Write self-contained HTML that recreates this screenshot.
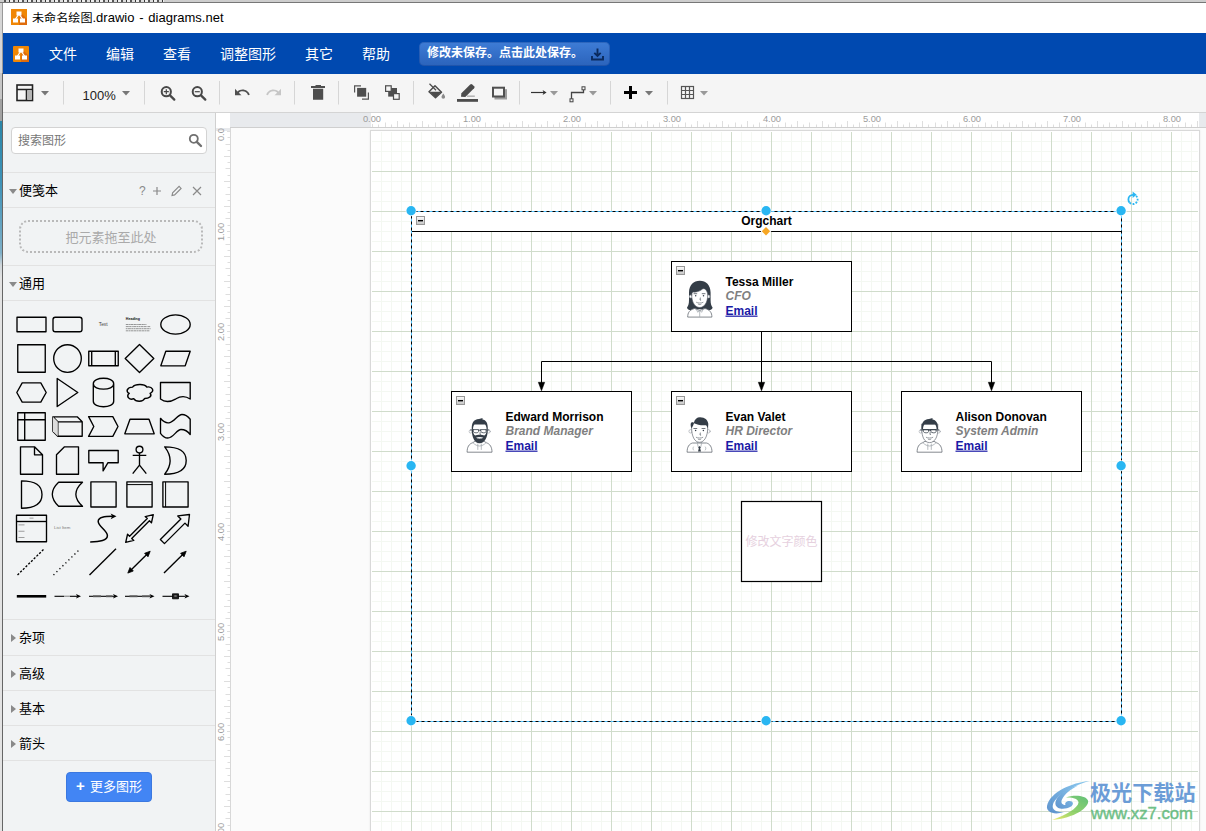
<!DOCTYPE html>
<html lang="zh-CN">
<head>
<meta charset="utf-8">
<title>未命名绘图.drawio - diagrams.net</title>
<style>
*{box-sizing:border-box;margin:0;padding:0}
html,body{width:1206px;height:831px;overflow:hidden;background:#c9c9c9}
body{position:relative;font-family:"Liberation Sans","Noto Sans CJK SC",sans-serif;font-size:12px;color:#000}
.abs{position:absolute}
#win{position:absolute;left:3px;top:3px;width:1203px;height:828px;background:#fbfbfb;overflow:hidden}
#title{position:absolute;left:0;top:0;width:1203px;height:30px;background:#fff}
#title .t{position:absolute;left:29px;top:6px;font-size:12.1px;line-height:18px;white-space:nowrap;color:#000}
#title .t span{font-size:13px;word-spacing:1.2px}
#menubar{position:absolute;left:0;top:30px;width:1203px;height:41px;background:#0049b0}
#menubar .m{position:absolute;top:12px;font-size:14px;line-height:18px;color:#fff;white-space:nowrap}
#save{position:absolute;left:416px;top:9px;width:191px;height:24px;border-radius:5px;background:linear-gradient(#3e7cd6,#2b63bb);box-shadow:0 0 0 1px rgba(0,40,120,.25) inset;color:#fff;font-weight:bold;font-size:12px;line-height:23px;padding-left:8px;white-space:nowrap}
#toolbar{position:absolute;left:0;top:71px;width:1203px;height:39px;background:#f5f5f5;border-bottom:1px solid #d4d4d4}
.sep{position:absolute;top:10px;width:1px;height:22px;background:#d6d6d6}
#sidebar{position:absolute;left:0;top:110px;width:213px;height:718px;background:#f1f3f4;border-right:1px solid #d0d0d0}
.sect{position:absolute;left:0;width:212px;border-top:1px solid #e2e2e2}
.sect .lbl{position:absolute;left:16px;font-size:13px;line-height:16px;white-space:nowrap;color:#000}
.tri-d{position:absolute;width:0;height:0;border-left:4px solid transparent;border-right:4px solid transparent;border-top:5px solid #8a8a8a}
.tri-r{position:absolute;width:0;height:0;border-top:4px solid transparent;border-bottom:4px solid transparent;border-left:5px solid #8a8a8a}
#hruler{position:absolute;left:227px;top:110px;width:976px;height:15px;background:#fff;border-bottom:1px solid #cfcfcf}
#vruler{position:absolute;left:213px;top:125px;width:15px;height:703px;background:#fff;border-right:1px solid #d8d8d8}
#corner{position:absolute;left:213px;top:110px;width:14px;height:15px;background:#fff}
#page{position:absolute;left:367px;top:127px;width:830px;height:701px;background:#fff;border:1px solid #d9d9d9;border-bottom:none;box-shadow:0 0 2px rgba(0,0,0,.08)}
</style>
</head>
<body>
<div class="abs" style="left:0;top:0;width:1206px;height:3px;background:#cdcdcd;border-bottom:1px solid #777"></div><div class="abs" style="left:4px;top:0;width:160px;height:2px;background:repeating-linear-gradient(90deg,#555 0 2px,#ddd 2px 5px,#333 5px 6px,#eee 6px 9px)"></div>
<div class="abs" style="left:0;top:3px;width:3px;height:828px;background:linear-gradient(#d6d6d6 0 70px,#c6c6c6 70px 96px,#a2a2a2 96px 118px,#2a86a8 118px,#3f93b8 180px,#7fb0c8 250px,#cfd6da 262px,#e3e3e3 275px)"></div><div class="abs" style="left:2px;top:3px;width:1px;height:70px;background:#999"></div><div class="abs" style="left:2px;top:73px;width:1px;height:758px;background:#666"></div>
<div id="win">
  <!-- title bar -->
  <div id="title">
    <svg class="abs" style="left:8px;top:6px" width="16" height="16" viewBox="0 0 16 16"><rect width="16" height="16" fill="#f08705"/><path d="M9 3 L16 10 L16 16 L8 16 Z" fill="#df6c0c"/><rect x="5.5" y="2.5" width="5" height="4" fill="#fff"/><rect x="2" y="9.5" width="5" height="4" fill="#fff"/><rect x="9" y="9.5" width="5" height="4" fill="#fff"/><path d="M7.3 6 L4.5 10 M8.7 6 L11.5 10" stroke="#fff" stroke-width="1.3"/></svg>
    <div class="t"><b style="font-weight:normal;display:inline-block;transform:scaleY(.9);transform-origin:50% 62%">未命名绘图</b><span>.drawio - diagrams.net</span></div>
  </div>
  <!-- menubar -->
  <div id="menubar">
    <svg class="abs" style="left:10px;top:13px" width="16" height="16" viewBox="0 0 16 16"><rect width="16" height="16" rx="1" fill="#f08705"/><path d="M9 3 L16 10 L16 16 L8 16 Z" fill="#df6c0c"/><rect x="5.5" y="2.5" width="5" height="4" fill="#fff"/><rect x="2" y="9.5" width="5" height="4" fill="#fff"/><rect x="9" y="9.5" width="5" height="4" fill="#fff"/><path d="M7.3 6 L4.5 10 M8.7 6 L11.5 10" stroke="#fff" stroke-width="1.3"/></svg>
    <div class="m" style="left:46px">文件</div>
    <div class="m" style="left:103px">编辑</div>
    <div class="m" style="left:160px">查看</div>
    <div class="m" style="left:217px">调整图形</div>
    <div class="m" style="left:302px">其它</div>
    <div class="m" style="left:359px">帮助</div>
    <div id="save">修改未保存。点击此处保存。<svg class="abs" style="left:172px;top:6px" width="13" height="13" viewBox="0 0 13 13"><path d="M6.500 0.500 V7.500 M3.300 4.800 L6.500 8 L9.700 4.800" fill="none" stroke="#0a2a5e" stroke-width="1.900"/><path d="M1 8 V11.500 H12 V8" fill="none" stroke="#0a2a5e" stroke-width="1.900"/></svg></div>
  </div>
  <!-- toolbar -->
  <div id="toolbar"><svg class="abs" style="left:0;top:-1px" width="1203" height="40" viewBox="3 73 1203 40">
<g fill="none" stroke="#222" stroke-width="1.6">
<rect x="17" y="85" width="15.5" height="15.5"/><path d="M17 89.5 H32.5 M26.5 89.5 V100.5"/>
</g>
<rect x="27.3" y="90.3" width="4.4" height="9.4" fill="#b5b5b5"/>
<g fill="#777"><path d="M41 91 h8 l-4 4.5z"/><path d="M122 91 h8 l-4 4.5z"/></g>
<g fill="#999"><path d="M550 91 h8 l-4 4.5z"/><path d="M589 91 h8 l-4 4.5z"/><path d="M700 91 h8 l-4 4.5z"/></g>
<path d="M645 91 h8 l-4 4.5z" fill="#777"/>
<g fill="#d6d6d6"><rect x="63" y="81" width="1" height="23.5"/><rect x="144" y="81" width="1" height="23.5"/><rect x="219" y="81" width="1" height="23.5"/><rect x="294" y="81" width="1" height="23.5"/><rect x="338" y="81" width="1" height="23.5"/><rect x="413" y="81" width="1" height="23.5"/><rect x="519" y="81" width="1" height="23.5"/><rect x="610" y="81" width="1" height="23.5"/><rect x="667" y="81" width="1" height="23.5"/></g>
<text x="82.5" y="99.5" font-size="13" fill="#222" style="font-family:'Liberation Sans',sans-serif">100%</text>
<!-- zoom in/out -->
<g fill="none" stroke="#484848" stroke-width="2"><circle cx="166.300" cy="91.700" r="4.600"/><path d="M170 95.400 L174.300 99.600" stroke-width="2.300" stroke-linecap="round"/><path d="M163.800 91.700 h5 M166.300 89.200 v5" stroke-width="1.200"/>
<circle cx="197.300" cy="91.700" r="4.600"/><path d="M201 95.400 L205.300 99.600" stroke-width="2.300" stroke-linecap="round"/><path d="M194.800 91.700 h5" stroke-width="1.200"/></g>
<!-- undo / redo -->
<path transform="translate(233.560 83.760) scale(.72)" d="M12.5 8c-2.650 0-5.050.990-6.900 2.600L2 7v9h9l-3.620-3.620c1.390-1.160 3.160-1.880 5.120-1.880 3.540 0 6.550 2.310 7.600 5.500l2.370-.780C21.080 11.030 17.150 8 12.500 8z" fill="#505050"/>
<path transform="translate(265.160 83.760) scale(.72)" d="M18.400 10.600C16.550 8.990 14.150 8 11.500 8c-4.650 0-8.580 3.030-9.960 7.220L3.900 16c1.050-3.190 4.050-5.500 7.600-5.500 1.950 0 3.730.720 5.120 1.880L13 16h9V7l-3.600 3.600z" fill="#c6c6c6"/>
<!-- trash -->
<path d="M311 86 h4.500 v-1 h5.500 v1 h4 v2 h-14z M313 88.800 h10.200 v11 h-10.200z" fill="#4e4e4e"/>
<!-- to front -->
<g><path d="M354 85.200 h7 v1.200 h-5.800 v6.100 h-1.200z M369 99.800 h-7 v-1.200 h5.800 v-6.100 h1.200z" fill="#555"/><rect x="357.100" y="87.900" width="9.100" height="8.800" fill="#4e4e4e"/></g>
<!-- to back -->
<g><rect x="388.200" y="88" width="8.800" height="8.600" fill="#4e4e4e"/><rect x="385.600" y="85.800" width="5.600" height="5.600" fill="#f5f5f5" stroke="#4e4e4e" stroke-width="1.200"/><rect x="393.500" y="93.600" width="5.700" height="5.700" fill="#f5f5f5" stroke="#4e4e4e" stroke-width="1.200"/></g>
<!-- fill bucket -->
<g transform="translate(-1 -.8)"><path d="M430.500 84.500 L437 91" stroke="#4c4c4c" stroke-width="1.300" fill="none"/><path d="M436 86.500 L442.500 93 L436.500 98.500 L430 92.500 Z" fill="none" stroke="#4c4c4c" stroke-width="1.500" stroke-linejoin="round"/><path d="M430.500 92.500 H442.500 L436.500 98.300 Z" fill="#4c4c4c"/><path d="M444.300 94.300 c1 1.500 1.800 2.500 1.800 3.400 a1.800 1.800 0 0 1 -3.600 0 c0 -0.900 0.800 -1.900 1.800 -3.400z" fill="#8a8a8a"/></g>
<!-- line colour pencil -->
<g><rect x="457" y="99" width="21" height="2.800" fill="#4c4c4c"/><path d="M461 96.800 l0.400 -3.600 l8.800 -8.800 a1.500 1.500 0 0 1 2.100 0 l1.800 1.800 a1.500 1.500 0 0 1 0 2.100 l-8.800 8.800z" fill="#4c4c4c"/><rect x="467" y="95.600" width="7.800" height="1.100" fill="#9a9a9a"/></g>
<!-- shadow -->
<g><rect x="494.500" y="89.200" width="12.500" height="10.300" fill="#9d9d9d"/><rect x="493" y="87.700" width="11" height="8.800" fill="#f5f5f5" stroke="#505050" stroke-width="2"/></g>
<!-- connection arrow -->
<path d="M531 92.500 H544" stroke="#333" stroke-width="1.200" fill="none"/><path d="M546.600 92.500 L542.600 90 L543.600 92.500 L542.600 95 Z" fill="#333"/>
<!-- waypoints -->
<g fill="none" stroke="#444" stroke-width="1.300"><path d="M571.500 99 V92.500 H583.500 V89.500"/><rect x="570" y="98.800" width="3" height="3" fill="#f5f5f5" stroke-width="1"/><rect x="582" y="86.800" width="3" height="3" fill="#f5f5f5" stroke-width="1"/></g>
<!-- plus -->
<path d="M624 92.500 H637 M630.500 86 V99" stroke="#000" stroke-width="3" fill="none"/>
<!-- table -->
<g fill="none" stroke="#555" stroke-width="1.200"><rect x="681.500" y="86.500" width="12" height="12"/><path d="M685.500 86.500 V98.500 M689.500 86.500 V98.500 M681.500 90.500 H693.500 M681.500 94.500 H693.500"/></g>
</svg>
</div>
  <!-- sidebar -->
  <div id="sidebar"><div class="abs" style="left:8px;top:14px;width:196px;height:27px;background:#fff;border:1px solid #d3d3d3;border-radius:4px"></div>
<div class="abs" style="left:15px;top:20px;font-size:12px;line-height:16px;color:#777;white-space:nowrap">搜索图形</div>
<svg class="abs" style="left:185px;top:20px" width="15" height="15" viewBox="0 0 15 15"><circle cx="5.8" cy="5.8" r="4" fill="none" stroke="#707070" stroke-width="1.8"/><path d="M8.800 8.800 L13 13" stroke="#707070" stroke-width="2.4" stroke-linecap="round"/></svg>
<div class="sect" style="top:59px;height:36px"><div class="tri-d" style="left:6px;top:16px"></div><div class="lbl" style="top:10px">便笺本</div>
<div class="abs" style="left:136px;top:10px;font-size:12px;line-height:16px;color:#8a8a8a">?</div>
<svg class="abs" style="left:148px;top:12px" width="54" height="12" viewBox="0 0 54 12"><g stroke="#8a8a8a" fill="none" stroke-width="1.2"><path d="M2 6 H10 M6 2 V10"/><path d="M42 2 L50 10 M50 2 L42 10"/></g><path d="M21 10.500 l0.600 -2.600 l6.500 -6.500 l2 2 l-6.500 6.500z" fill="none" stroke="#8a8a8a" stroke-width="1.100"/></svg></div>
<div class="sect" style="top:94px;height:58px"><div class="abs" style="left:16px;top:12px;width:184px;height:33px;border:2px dotted #b9b9b9;border-radius:9px"></div><div class="abs" style="left:16px;top:12px;width:184px;height:33px;line-height:35px;text-align:center;font-size:13px;color:#aaa">把元素拖至此处</div></div>
<div class="sect" style="top:152px;height:36px"><div class="tri-d" style="left:6px;top:16px"></div><div class="lbl" style="top:10px">通用</div></div>
<div class="sect" style="top:187px;height:320px"></div>
<div class="sect" style="top:506px;height:36px"><div class="tri-r" style="left:8px;top:14px"></div><div class="lbl" style="top:10px">杂项</div></div>
<div class="sect" style="top:542px;height:36px"><div class="tri-r" style="left:8px;top:14px"></div><div class="lbl" style="top:10px">高级</div></div>
<div class="sect" style="top:577px;height:36px"><div class="tri-r" style="left:8px;top:14px"></div><div class="lbl" style="top:10px">基本</div></div>
<div class="sect" style="top:612px;height:36px"><div class="tri-r" style="left:8px;top:14px"></div><div class="lbl" style="top:10px">箭头</div></div>
<div class="sect" style="top:647px;height:71px"><div class="abs" style="left:63px;top:11px;width:86px;height:30px;border-radius:4px;background:#4285f4;border:1px solid #3b78e0;color:#fff;font-size:13px;line-height:28px;white-space:nowrap"><span class="abs" style="left:9px;top:-1px;font-weight:bold;font-size:15px">+</span><span class="abs" style="left:23px;top:0">更多图形</span></div></div>
<svg class="abs" style="left:0;top:0" width="212" height="718" viewBox="3 113 212 718"><g fill="none" stroke="#000" stroke-width="1.35" stroke-linejoin="round" style="font-family:'Liberation Sans',sans-serif">
<rect x="17" y="317.25" width="29" height="14.5" />
<rect x="53" y="317.25" width="29" height="14.5" rx="2.3"/>
<text x="103.200" y="326.300" font-size="4.900" text-anchor="middle" fill="#444" stroke="none">Text</text>
<text x="125.800" y="320.400" font-size="3.600" fill="#111" stroke="none" font-weight="bold">Heading</text>
<path d="M125.800 324.50 H146.5" stroke="#555" stroke-width=".600" stroke-dasharray="2.2 .4 1.500 .4 3 .4" fill="none"/>
<path d="M125.800 326.60 H150.2" stroke="#555" stroke-width=".600" stroke-dasharray="3 .4 2 .4 1.200 .4" fill="none"/>
<path d="M125.800 328.70 H150.6" stroke="#555" stroke-width=".600" stroke-dasharray="1.500 .4 3.200 .4 2 .4" fill="none"/>
<path d="M125.800 330.80 H149.5" stroke="#555" stroke-width=".600" stroke-dasharray="2.600 .4 1.800 .4 2.400 .4" fill="none"/>
<ellipse cx="175.5" cy="324.5" rx="14.7" ry="9.6"/>
<rect x="17.75" y="344.75" width="27.5" height="27.5" />
<circle cx="67.5" cy="358.5" r="13.8"/>
<rect x="88.75" y="351.25" width="29.5" height="14.5" />
<path transform="translate(103.5 358.5)" d="M-11.8 -7.25 V7.25 M11.8 -7.25 V7.25" />
<path transform="translate(139.5 358.5)" d="M0 -14 L14.3 0 L0 14 L-14.3 0 Z" />
<path transform="translate(175.5 358.5)" d="M-14.7 7.3 L-9.7 -7.3 H14.7 L9.7 7.3 Z" />
<path transform="translate(31.5 392.5)" d="M-14.700 0 L-9.300 -9.600 H9.300 L14.700 0 L9.300 9.600 H-9.300 Z" />
<path transform="translate(67.5 392.5)" d="M-10.3 -14 L10.3 0 L-10.3 14 Z" />
<path transform="translate(103.5 392.5)" d="M-10.200 -8.800 C-10.200 -16.100 10.200 -16.100 10.200 -8.800 V8.800 C10.200 16.100 -10.200 16.100 -10.200 8.800 Z M-10.200 -8.800 C-10.200 -1.500 10.200 -1.500 10.200 -8.800" />
<path transform="translate(139.7 392.8) scale(1.1 1.04)" d="M-6.5 -5.5 C-11.5 -5.500 -13 -1 -9.500 0.500 C-13 3.500 -9 7.500 -5.500 5.700 C-3.500 9 3 9 4.500 5.500 C8.500 5.500 11.500 3 9.500 0.500 C14 -1.500 11.500 -6.500 6.500 -5.500 C4 -9 -4 -8.500 -6.500 -5.500 Z" />
<path transform="translate(175.5 392.5)" d="M-15 -10 H14.700 V6.500 C10 3.300 5 3.500 0.500 6.300 C-4.500 9.200 -10 10.500 -15 6.500 Z" />
<rect x="17.75" y="412.75" width="27.5" height="27.5" />
<path transform="translate(31.5 426.5)" d="M-6.8 -13.75 V13.75 M-13.75 -6.8 H13.75" />
<path transform="translate(67.5 426.5)" d="M-14.700 -9.700 H9.700 L14.700 -4.700 V9.700 H-9.700 L-14.700 4.700 Z M-14.700 -9.700 L-9.700 -4.700 H14.700 M-9.700 -4.700 V9.700" />
<path transform="translate(67.5 426.5)" d="M-14.700 -9.700 L-9.700 -4.700 V9.700 L-14.700 4.700 Z" fill="#dcdcdc" stroke="none"/>
<path transform="translate(103.5 426.5)" d="M-14.900 -9.900 H9.300 L14.500 0 L9.300 9.900 H-14.900 L-9.700 0 Z" />
<path transform="translate(139.5 426.5)" d="M-14.700 7.300 L-9.500 -7.300 H9.500 L14.700 7.300 Z" />
<path transform="translate(175.5 426.5)" d="M-15 -8.200 C-12 -4.500 -9 -3.300 -6.500 -3.700 C-1 -4.500 2 -12 6.500 -12 C10 -12 12.500 -10 14.700 -7.300 V8.100 C12.500 5 9.500 3 5.500 3 C1 3 -2 11.500 -7.800 11.500 C-10.500 11.500 -13 9.500 -15 6.800 Z" />
<path transform="translate(31.5 460.5)" d="M-11 -13.700 H3 L11 -5.700 V13.700 H-11 Z M3 -13.700 V-5.700 H11" />
<path transform="translate(67.5 460.5)" d="M-3 -13.700 H11 V13.700 H-11 V-5.700 Z" />
<path transform="translate(103.5 460.5)" d="M-14.700 -10 H14.700 V2.200 H4.500 L-0.400 10.400 V2.200 H-14.700 Z" />
<path transform="translate(139.5 460.5)" d="M0 -7.500 V4.700 M-6.800 -5.100 H6.800 M0 4.700 L-6.800 13.200 M0 4.700 L6.800 13.200" />
<circle cx="139.5" cy="449.600" r="3.400"/>
<path transform="translate(175.5 460.5)" d="M-10.800 -13.700 Q10.700 -13.700 10.700 0 Q10.700 13.700 -10.800 13.700 Q0 0 -10.800 -13.700 Z" />
<path transform="translate(31.5 494.5)" d="M-10 -13.700 Q10.500 -13.700 10.500 0 Q10.500 13.700 -10 13.700 Z" />
<path transform="translate(67.5 494.5)" d="M-8.900 -12.300 H15 Q1.700 -0.300 15 11.700 H-8.900 Q-21.500 -0.300 -8.900 -12.300 Z" />
<rect x="90.9" y="481.800" width="25.200" height="25.200" />
<rect x="126.9" y="481.800" width="25.200" height="25.200" />
<path transform="translate(139.5 494.5)" d="M-12.600 -9.900 H12.600" stroke-width="1" />
<rect x="162.9" y="481.800" width="25.200" height="25.200" />
<path transform="translate(175.5 494.5)" d="M-9.900 -12.600 V12.600" stroke-width="1" />
<rect x="16.5" y="515.25" width="30" height="26.5" />
<path transform="translate(31.5 528.5)" d="M-15 -7 H15" />
<rect x="18.5" y="524.5" width="6" height="0.8" fill="#888" stroke="none"/>
<rect x="18.5" y="530.8" width="6" height="0.8" fill="#888" stroke="none"/>
<rect x="18.5" y="537.1" width="6" height="0.8" fill="#888" stroke="none"/>
<rect x="29.5" y="517.7" width="4" height="0.8" fill="#888" stroke="none"/>
<text x="54.0" y="529.0" font-size="4.300" fill="#777" stroke="none">List Item</text>
<path d="M90.200 541.900 C100 541.900 107.500 540.500 107.400 535.500 C107.300 530.500 98.300 526.500 98.200 521.500 C98.100 517 105 516.400 112.500 516.300" stroke-width="1.500"/>
<path d="M116.500 516.300 L110.600 513.400 L112.200 516.300 L110.600 519.200 Z" fill="#000" stroke="none"/>
<path transform="translate(139.5 528.5) rotate(-45)" d="M-19.500 0 L-12.500 -4.400 V-1.500 H12.500 V-4.400 L19.500 0 L12.500 4.400 V1.500 H-12.500 V4.400 Z"/>
<path transform="translate(175.5 528.5) rotate(-45)" d="M-18.500 -2.900 H10.500 V-7.300 L19.800 0 L10.500 7.300 V2.900 H-18.500 Z"/>
<path d="M17.500 575 L44 549" stroke-dasharray="2.2 1.6"/>
<path d="M53.500 575 L79 550" stroke-dasharray="1.2 3"/>
<path d="M89.500 575 L116 548.800"/>
<path d="M130.500 570.500 L147.500 553.700"/><path d="M127.800 573.100 L130 567.500 L133.300 571 Z M150.200 551.200 L148 556.800 L144.600 553.300 Z" fill="#000" stroke-width="0.8"/>
<path d="M164 573 L183.500 553.700"/><path d="M186.200 551.200 L184 556.800 L180.600 553.300 Z" fill="#000" stroke-width="0.8"/>
<path d="M16.800 596.3 H46.200" stroke-width="2.6"/>
<path d="M54.5 596.3 H77" stroke-width="1.1"/><path d="M81 596.3 l-5 -2.200 l1.200 2.200 l-1.200 2.200 Z" fill="#000" stroke="none"/>
<rect x="64" y="595.3" width="6" height="2" fill="#f1f3f4" stroke="none" opacity="0.6"/>
<path d="M89 596.3 H114" stroke-width="1.1"/><path d="M118 596.3 l-5 -2.200 l1.200 2.200 l-1.200 2.200 Z" fill="#000" stroke="none"/>
<rect x="93" y="595.400" width="8" height="1.800" fill="#555" stroke="none"/><rect x="106" y="595.400" width="6.500" height="1.800" fill="#555" stroke="none"/>
<path d="M125 596.3 H150.5" stroke-width="1.1"/><path d="M154.5 596.3 l-5 -2.200 l1.200 2.200 l-1.200 2.200 Z" fill="#000" stroke="none"/>
<rect x="129.500" y="595.400" width="8" height="1.800" fill="#555" stroke="none"/><rect x="142" y="595.400" width="8" height="1.800" fill="#555" stroke="none"/>
<path d="M162.5 596.3 H185.5" stroke-width="1.1"/><path d="M189.5 596.3 l-5 -2.200 l1.200 2.200 l-1.200 2.200 Z" fill="#000" stroke="none"/>
<rect x="172.500" y="593.8" width="6" height="5" fill="#1c1c1c" stroke="#000" stroke-width="0.8"/><rect x="174.3" y="595.5" width="2.400" height="1" fill="#aaa" stroke="none"/>
</g></svg><!--SIDEBAR_END--></div>
  <!-- rulers -->
  <div id="corner"></div>
  <div id="hruler"><svg class="abs" style="left:0;top:0;font-family:'Liberation Sans',sans-serif" width="976" height="15" viewBox="230 113 976 15">
<rect x="230" y="113" width="141" height="14" fill="#e8eaed"/><rect x="1199" y="113" width="7" height="14" fill="#e8eaed"/>
<path d="M372.5 127 v-3 M378.5 127 v-2.5 M385.5 127 v-4.5 M391.5 127 v-2.5 M397.5 127 v-6 M403.5 127 v-2.5 M409.5 127 v-4.5 M416.5 127 v-2.5 M422.5 127 v-6 M428.5 127 v-2.5 M435.5 127 v-4.5 M441.5 127 v-2.5 M447.5 127 v-6 M453.5 127 v-2.5 M459.5 127 v-4.5 M466.5 127 v-2.5 M472.5 127 v-3 M478.5 127 v-2.5 M485.5 127 v-4.5 M491.5 127 v-2.5 M497.5 127 v-6 M503.5 127 v-2.5 M509.5 127 v-4.5 M516.5 127 v-2.5 M522.5 127 v-6 M528.5 127 v-2.5 M535.5 127 v-4.5 M541.5 127 v-2.5 M547.5 127 v-6 M553.5 127 v-2.5 M559.5 127 v-4.5 M566.5 127 v-2.5 M572.5 127 v-3 M578.5 127 v-2.5 M585.5 127 v-4.5 M591.5 127 v-2.5 M597.5 127 v-6 M603.5 127 v-2.5 M609.5 127 v-4.5 M616.5 127 v-2.5 M622.5 127 v-6 M628.5 127 v-2.5 M635.5 127 v-4.5 M641.5 127 v-2.5 M647.5 127 v-6 M653.5 127 v-2.5 M659.5 127 v-4.5 M666.5 127 v-2.5 M672.5 127 v-3 M678.5 127 v-2.5 M685.5 127 v-4.5 M691.5 127 v-2.5 M697.5 127 v-6 M703.5 127 v-2.5 M709.5 127 v-4.5 M716.5 127 v-2.5 M722.5 127 v-6 M728.5 127 v-2.5 M735.5 127 v-4.5 M741.5 127 v-2.5 M747.5 127 v-6 M753.5 127 v-2.5 M759.5 127 v-4.5 M766.5 127 v-2.5 M772.5 127 v-3 M778.5 127 v-2.5 M785.5 127 v-4.5 M791.5 127 v-2.5 M797.5 127 v-6 M803.5 127 v-2.5 M809.5 127 v-4.5 M816.5 127 v-2.5 M822.5 127 v-6 M828.5 127 v-2.5 M835.5 127 v-4.5 M841.5 127 v-2.5 M847.5 127 v-6 M853.5 127 v-2.5 M859.5 127 v-4.5 M866.5 127 v-2.5 M872.5 127 v-3 M878.5 127 v-2.5 M885.5 127 v-4.5 M891.5 127 v-2.5 M897.5 127 v-6 M903.5 127 v-2.5 M909.5 127 v-4.5 M916.5 127 v-2.5 M922.5 127 v-6 M928.5 127 v-2.5 M935.5 127 v-4.5 M941.5 127 v-2.5 M947.5 127 v-6 M953.5 127 v-2.5 M959.5 127 v-4.5 M966.5 127 v-2.5 M972.5 127 v-3 M978.5 127 v-2.5 M985.5 127 v-4.5 M991.5 127 v-2.5 M997.5 127 v-6 M1003.5 127 v-2.5 M1009.5 127 v-4.5 M1016.5 127 v-2.5 M1022.5 127 v-6 M1028.5 127 v-2.5 M1035.5 127 v-4.5 M1041.5 127 v-2.5 M1047.5 127 v-6 M1053.5 127 v-2.5 M1059.5 127 v-4.5 M1066.5 127 v-2.5 M1072.5 127 v-3 M1078.5 127 v-2.5 M1085.5 127 v-4.5 M1091.5 127 v-2.5 M1097.5 127 v-6 M1103.5 127 v-2.5 M1109.5 127 v-4.5 M1116.5 127 v-2.5 M1122.5 127 v-6 M1128.5 127 v-2.5 M1135.5 127 v-4.5 M1141.5 127 v-2.5 M1147.5 127 v-6 M1153.5 127 v-2.5 M1159.5 127 v-4.5 M1166.5 127 v-2.5 M1172.5 127 v-3 M1178.5 127 v-2.5 M1185.5 127 v-4.5 M1191.5 127 v-2.5 M1197.5 127 v-6" stroke="#dedede" stroke-width="1" fill="none"/>
<text x="372" y="122" font-size="9.3" fill="#9c9c9c" text-anchor="middle">0.00</text>
<text x="472" y="122" font-size="9.3" fill="#9c9c9c" text-anchor="middle">1.00</text>
<text x="572" y="122" font-size="9.3" fill="#9c9c9c" text-anchor="middle">2.00</text>
<text x="672" y="122" font-size="9.3" fill="#9c9c9c" text-anchor="middle">3.00</text>
<text x="772" y="122" font-size="9.3" fill="#9c9c9c" text-anchor="middle">4.00</text>
<text x="872" y="122" font-size="9.3" fill="#9c9c9c" text-anchor="middle">5.00</text>
<text x="972" y="122" font-size="9.3" fill="#9c9c9c" text-anchor="middle">6.00</text>
<text x="1072" y="122" font-size="9.3" fill="#9c9c9c" text-anchor="middle">7.00</text>
<text x="1172" y="122" font-size="9.3" fill="#9c9c9c" text-anchor="middle">8.00</text>
</svg></div>
  <div id="vruler"><svg class="abs" style="left:0;top:0;font-family:'Liberation Sans',sans-serif" width="14" height="703" viewBox="216 128 14 703">
<rect x="216" y="128" width="14" height="3" fill="#e8eaed"/>
<path d="M230 131.5 h-3 M230 137.5 h-2.5 M230 144.5 h-4.5 M230 150.5 h-2.5 M230 156.5 h-6 M230 162.5 h-2.5 M230 168.5 h-4.5 M230 175.5 h-2.5 M230 181.5 h-6 M230 187.5 h-2.5 M230 194.5 h-4.5 M230 200.5 h-2.5 M230 206.5 h-6 M230 212.5 h-2.5 M230 218.5 h-4.5 M230 225.5 h-2.5 M230 231.5 h-3 M230 237.5 h-2.5 M230 244.5 h-4.5 M230 250.5 h-2.5 M230 256.5 h-6 M230 262.5 h-2.5 M230 268.5 h-4.5 M230 275.5 h-2.5 M230 281.5 h-6 M230 287.5 h-2.5 M230 294.5 h-4.5 M230 300.5 h-2.5 M230 306.5 h-6 M230 312.5 h-2.5 M230 318.5 h-4.5 M230 325.5 h-2.5 M230 331.5 h-3 M230 337.5 h-2.5 M230 344.5 h-4.5 M230 350.5 h-2.5 M230 356.5 h-6 M230 362.5 h-2.5 M230 368.5 h-4.5 M230 375.5 h-2.5 M230 381.5 h-6 M230 387.5 h-2.5 M230 394.5 h-4.5 M230 400.5 h-2.5 M230 406.5 h-6 M230 412.5 h-2.5 M230 418.5 h-4.5 M230 425.5 h-2.5 M230 431.5 h-3 M230 437.5 h-2.5 M230 444.5 h-4.5 M230 450.5 h-2.5 M230 456.5 h-6 M230 462.5 h-2.5 M230 468.5 h-4.5 M230 475.5 h-2.5 M230 481.5 h-6 M230 487.5 h-2.5 M230 494.5 h-4.5 M230 500.5 h-2.5 M230 506.5 h-6 M230 512.5 h-2.5 M230 518.5 h-4.5 M230 525.5 h-2.5 M230 531.5 h-3 M230 537.5 h-2.5 M230 544.5 h-4.5 M230 550.5 h-2.5 M230 556.5 h-6 M230 562.5 h-2.5 M230 568.5 h-4.5 M230 575.5 h-2.5 M230 581.5 h-6 M230 587.5 h-2.5 M230 594.5 h-4.5 M230 600.5 h-2.5 M230 606.5 h-6 M230 612.5 h-2.5 M230 618.5 h-4.5 M230 625.5 h-2.5 M230 631.5 h-3 M230 637.5 h-2.5 M230 644.5 h-4.5 M230 650.5 h-2.5 M230 656.5 h-6 M230 662.5 h-2.5 M230 668.5 h-4.5 M230 675.5 h-2.5 M230 681.5 h-6 M230 687.5 h-2.5 M230 694.5 h-4.5 M230 700.5 h-2.5 M230 706.5 h-6 M230 712.5 h-2.5 M230 718.5 h-4.5 M230 725.5 h-2.5 M230 731.5 h-3 M230 737.5 h-2.5 M230 744.5 h-4.5 M230 750.5 h-2.5 M230 756.5 h-6 M230 762.5 h-2.5 M230 768.5 h-4.5 M230 775.5 h-2.5 M230 781.5 h-6 M230 787.5 h-2.5 M230 794.5 h-4.5 M230 800.5 h-2.5 M230 806.5 h-6 M230 812.5 h-2.5 M230 818.5 h-4.5 M230 825.5 h-2.5 M230 831.5 h-3" stroke="#dedede" stroke-width="1" fill="none"/>
<text transform="translate(223.600 132) rotate(-90)" font-size="9.3" fill="#9c9c9c" text-anchor="middle">0.00</text>
<text transform="translate(223.600 232) rotate(-90)" font-size="9.3" fill="#9c9c9c" text-anchor="middle">1.00</text>
<text transform="translate(223.600 332) rotate(-90)" font-size="9.3" fill="#9c9c9c" text-anchor="middle">2.00</text>
<text transform="translate(223.600 432) rotate(-90)" font-size="9.3" fill="#9c9c9c" text-anchor="middle">3.00</text>
<text transform="translate(223.600 532) rotate(-90)" font-size="9.3" fill="#9c9c9c" text-anchor="middle">4.00</text>
<text transform="translate(223.600 632) rotate(-90)" font-size="9.3" fill="#9c9c9c" text-anchor="middle">5.00</text>
<text transform="translate(223.600 732) rotate(-90)" font-size="9.3" fill="#9c9c9c" text-anchor="middle">6.00</text>
<text transform="translate(223.600 832) rotate(-90)" font-size="9.3" fill="#9c9c9c" text-anchor="middle">7.00</text>
</svg></div>
  <!-- page -->
  <div id="page"><svg class="abs" width="829" height="700" viewBox="371 131 829 700" style="left:0;top:0;font-family:'Liberation Sans','Noto Sans CJK SC',sans-serif">
<defs><linearGradient id="cg" x1="0" y1="0" x2="0" y2="1"><stop offset="0" stop-color="#fcfcfc"/><stop offset="1" stop-color="#c4c4c4"/></linearGradient><pattern id="grid" x="371" y="131" width="40" height="40" patternUnits="userSpaceOnUse"><path d="M10.5 0 V40 M20.5 0 V40 M30.5 0 V40 M0 10.5 H40 M0 20.5 H40 M0 30.5 H40" stroke="#f4f8f2" stroke-width="1" fill="none"/><path d="M0.5 0 V40 M0 0.5 H40" stroke="#d0dccb" stroke-width="1" fill="none"/></pattern></defs>
<rect x="371" y="131" width="828" height="700" fill="#fff"/>
<rect x="372" y="132" width="826" height="699" fill="url(#grid)"/>
<rect x="411.5" y="211.5" width="710" height="510" fill="none" stroke="#000"/>
<rect x="411.5" y="211.5" width="710" height="20" fill="#fff" stroke="#000"/>
<text x="766.5" y="225.3" text-anchor="middle" font-size="12" font-weight="bold">Orgchart</text>
<g><rect x="416.5" y="216.5" width="8" height="8" fill="url(#cg)" stroke="#979797" stroke-width="1"/><rect x="418" y="220" width="5" height="1.4" fill="#000"/></g>
<path d="M761.5 331.5 V383 M541.5 383 V361.5 H991.5 V383" fill="none" stroke="#000" stroke-width="1"/>
<path d="M541.5 390.8 L538.3 382.300 H544.7 Z" fill="#000" stroke="#000" stroke-width=".5" stroke-linejoin="miter"/>
<path d="M761.5 390.8 L758.3 382.300 H764.7 Z" fill="#000" stroke="#000" stroke-width=".5" stroke-linejoin="miter"/>
<path d="M991.5 390.8 L988.3 382.300 H994.7 Z" fill="#000" stroke="#000" stroke-width=".5" stroke-linejoin="miter"/>
<rect x="671.5" y="261.5" width="180" height="70" fill="#fff" stroke="#000"/>
<g><rect x="676.5" y="266.5" width="8" height="8" fill="url(#cg)" stroke="#979797" stroke-width="1"/><rect x="678" y="270" width="5" height="1.4" fill="#000"/></g>
<text x="725.5" y="285.8" font-size="12" font-weight="bold">Tessa Miller</text>
<text x="725.5" y="300.2" font-size="12" font-weight="bold" font-style="italic" fill="#808080">CFO</text>
<text x="725.5" y="314.6" font-size="12" font-weight="bold" fill="#1a1aa6" text-decoration="underline">Email</text>
<rect x="451.5" y="391.5" width="180" height="80" fill="#fff" stroke="#000"/>
<g><rect x="456.5" y="396.5" width="8" height="8" fill="url(#cg)" stroke="#979797" stroke-width="1"/><rect x="458" y="400" width="5" height="1.4" fill="#000"/></g>
<text x="505.5" y="420.8" font-size="12" font-weight="bold">Edward Morrison</text>
<text x="505.5" y="435.2" font-size="12" font-weight="bold" font-style="italic" fill="#808080">Brand Manager</text>
<text x="505.5" y="449.6" font-size="12" font-weight="bold" fill="#1a1aa6" text-decoration="underline">Email</text>
<rect x="671.5" y="391.5" width="180" height="80" fill="#fff" stroke="#000"/>
<g><rect x="676.5" y="396.5" width="8" height="8" fill="url(#cg)" stroke="#979797" stroke-width="1"/><rect x="678" y="400" width="5" height="1.4" fill="#000"/></g>
<text x="725.5" y="420.8" font-size="12" font-weight="bold">Evan Valet</text>
<text x="725.5" y="435.2" font-size="12" font-weight="bold" font-style="italic" fill="#808080">HR Director</text>
<text x="725.5" y="449.6" font-size="12" font-weight="bold" fill="#1a1aa6" text-decoration="underline">Email</text>
<rect x="901.5" y="391.5" width="180" height="80" fill="#fff" stroke="#000"/>
<text x="955.5" y="420.8" font-size="12" font-weight="bold">Alison Donovan</text>
<text x="955.5" y="435.2" font-size="12" font-weight="bold" font-style="italic" fill="#808080">System Admin</text>
<text x="955.5" y="449.6" font-size="12" font-weight="bold" fill="#1a1aa6" text-decoration="underline">Email</text>
<g id="av-tessa" transform="translate(680 275)" stroke-linecap="round" stroke-linejoin="round">
<path d="M19.800 5.800 C13.500 5.800 9.200 10 9 17.500 L9 25 C9 29 8.200 31 7 32.500 C7.500 35.500 11.500 35.800 14 34.300 L25.600 34.300 C28.100 35.800 32.100 35.500 32.600 32.500 C31.400 31 30.600 29 30.600 25 L30.600 17.500 C30.400 10 26.100 5.800 19.800 5.800 Z" fill="#343d47"/>
<path d="M7.700 41.700 C7.700 37.500 9.500 35 14.500 33.500 L19.700 35.500 L25 33.500 C30 35 31.900 37.500 31.900 41.700 Z" fill="#fff" stroke="#666c73" stroke-width=".8"/>
<path d="M16 33.800 L17.800 37.300 L19.700 35.300 L21.600 37.300 L23.500 33.800 M19.700 35.500 V41.500" fill="none" stroke="#9aa0a6" stroke-width=".7"/>
<circle cx="10.900" cy="21.500" r="1.500" fill="#fff" stroke="#9aa0a6" stroke-width=".6"/><circle cx="28.400" cy="21.500" r="1.500" fill="#fff" stroke="#9aa0a6" stroke-width=".6"/>
<path d="M11.700 20 C11.700 27.500 15 32.500 19.700 32.500 C24.400 32.500 27.700 27.500 27.700 20 C27.700 18 27 16 25.500 14.500 C24.500 13.500 23.500 13.500 22.500 14 C20 16.500 15 17.500 12.800 17 C12 18 11.700 19 11.700 20 Z" fill="#fff" stroke="#4b535c" stroke-width=".6"/>
<path d="M14 18.700 H16.800 M22.200 18.700 H25" stroke="#4b535c" stroke-width=".8" fill="none"/>
<circle cx="15.700" cy="20.700" r=".75" fill="#343d47"/><circle cx="23.500" cy="20.700" r=".75" fill="#343d47"/>
<path d="M20.300 23 L20 25 L20.700 25.100" stroke="#4b535c" stroke-width=".7" fill="none"/>
<path d="M16.500 27.400 C18 28.300 21.500 28.300 23 27.400 M18.500 29.300 C19.300 29.700 20.200 29.700 21 29.300" stroke="#6a7178" stroke-width=".7" fill="none"/>
</g>
<g id="av-edward" transform="translate(460 410)" stroke-linecap="round" stroke-linejoin="round">
<path d="M7.100 41.800 C7.100 37 9 34 12.500 32.800 L15 31.300 L24 31.300 L26.500 32.800 C30 34 32 37 32 41.800 Z" fill="#fff" stroke="#666c73" stroke-width=".8"/>
<path d="M13 32.700 C15 35 17 35.800 19.500 36 C22 35.800 24 35 26 32.700 M17.800 34 V39.500 M21.300 34 V39.500" fill="none" stroke="#9aa0a6" stroke-width=".7"/>
<circle cx="10.700" cy="21.500" r="1.600" fill="#fff" stroke="#9aa0a6" stroke-width=".6"/><circle cx="28.700" cy="21.500" r="1.600" fill="#fff" stroke="#9aa0a6" stroke-width=".6"/>
<path d="M11.800 19.500 C11.800 27.500 14.500 33.200 19.600 33.200 C24.700 33.200 27.800 27.500 27.800 19.500 L27.800 14 L11.800 14 Z" fill="#fff"/>
<path d="M11.800 19.500 C11.500 13 13.300 9.600 19 9 L22.700 7.900 L22.200 9.300 C26.200 10 28.100 13.500 27.800 19.500 L26.600 19.500 C26.600 17 26 15.200 25 14.400 L14.500 14.400 C13.500 15.200 13 17 13 19.500 Z" fill="#343d47"/>
<path d="M11.800 19.500 C11.800 27.500 14.500 33.200 19.600 33.200 C24.700 33.200 27.800 27.500 27.800 19.500 L26.600 19.500 C26.600 23 25.800 24.800 24.300 25.600 C22.500 24.500 16.800 24.500 15.200 25.600 C13.800 24.800 13 23 13 19.500 Z" fill="#343d47"/>
<path d="M16 27.600 C17.500 26.700 21.800 26.700 23.300 27.600 C22 29.200 17.300 29.200 16 27.600 Z" fill="#e9ebed"/>
<path d="M13.300 19.600 H18.600 V21.500 C18.600 23.300 13.300 23.300 13.300 21.500 Z M20.800 19.600 H26.100 V21.500 C26.100 23.300 20.800 23.300 20.800 21.500 Z M18.600 20.200 H20.800 M13.300 19.800 L10.500 20 M26.100 19.800 L28.900 20" fill="none" stroke="#343d47" stroke-width=".8"/>
<path d="M20.200 22.300 L19.900 24.300 L20.600 24.400" stroke="#4b535c" stroke-width=".7" fill="none"/>
</g>
<g id="av-evan" transform="translate(680 410)" stroke-linecap="round" stroke-linejoin="round">
<path d="M7.100 41.800 C7.100 37 9 34 12.500 33 L26.500 33 C30 34 32 37 32 41.800 Z" fill="#fff" stroke="#666c73" stroke-width=".8"/>
<path d="M17.400 31.500 V33.500 L18.300 37 M21.600 31.500 V33.500 L20.700 37 M13.400 37 C12.800 38 12.800 39 13.500 40 M25.400 37 C26 38 26 39 25.300 40" fill="none" stroke="#9aa0a6" stroke-width=".7"/>
<path d="M19.500 36 L20.800 37.500 L20.200 38.500 L21 41.600 L18 41.600 L18.800 38.500 L18.200 37.500 Z" fill="#343d47"/>
<circle cx="10.600" cy="21.300" r="1.700" fill="#fff" stroke="#9aa0a6" stroke-width=".6"/><circle cx="28.500" cy="21.300" r="1.700" fill="#fff" stroke="#9aa0a6" stroke-width=".6"/>
<path d="M11.600 18 C11.600 26 14.500 32.300 19.500 32.300 C24.500 32.300 27.700 26 27.700 18 L27.700 13 L11.600 13 Z" fill="#fff" stroke="#4b535c" stroke-width=".6"/>
<path d="M11.400 18.300 C10.300 15.500 10.500 12.700 12 12.200 C12.900 12 13.500 12.400 13.800 13 C14.500 9.200 17 7.300 20 7.300 C25 7.300 28.500 10.500 28.200 14.500 C28.100 16.500 27.900 17.500 27.600 18.300 C27.200 16.800 26.700 15.800 26 15.200 C22 15.800 17 14.800 14 13 C13.500 15.200 12.500 17.200 11.400 18.300 Z" fill="#343d47"/>
<path d="M13.800 18.500 H16.800 M22 18.500 H25" stroke="#4b535c" stroke-width=".8" fill="none"/>
<circle cx="15.600" cy="20.600" r=".75" fill="#343d47"/><circle cx="23.400" cy="20.600" r=".75" fill="#343d47"/>
<path d="M20.300 23 L20 25 L20.700 25.100" stroke="#4b535c" stroke-width=".7" fill="none"/>
<path d="M16.300 27.400 C17.800 28.300 21.300 28.300 22.800 27.400 M18.300 29.300 C19.100 29.700 20 29.700 20.800 29.300" stroke="#6a7178" stroke-width=".7" fill="none"/>
</g>
<g id="av-alison" transform="translate(910 410)" stroke-linecap="round" stroke-linejoin="round">
<path d="M7.100 41.800 C7.100 37 9 34 12.500 32.800 L15 31.300 L24 31.300 L26.500 32.800 C30 34 32 37 32 41.800 Z" fill="#fff" stroke="#666c73" stroke-width=".8"/>
<path d="M13 32.700 C15 35 17 35.800 19.500 36 C22 35.800 24 35 26 32.700 M17.800 34 V39.500 M21.300 34 V39.500" fill="none" stroke="#9aa0a6" stroke-width=".7"/>
<circle cx="10.700" cy="21.500" r="1.600" fill="#fff" stroke="#9aa0a6" stroke-width=".6"/><circle cx="28.700" cy="21.500" r="1.600" fill="#fff" stroke="#9aa0a6" stroke-width=".6"/>
<path d="M11.800 19.500 C11.800 27 14.500 32.600 19.600 32.600 C24.700 32.600 27.800 27 27.800 19.500 L27.800 14 L11.800 14 Z" fill="#fff" stroke="#4b535c" stroke-width=".6"/>
<path d="M11.600 19.500 C11.300 13 13.300 9.600 19 9 L22.700 7.900 L22.200 9.300 C26.200 10 28.300 13.500 28 19.500 L26.600 19.500 C26.600 17 26 15.200 25 14.400 L14.500 14.400 C13.500 15.200 13 17 13 19.500 Z" fill="#343d47"/>
<path d="M13.300 19.600 H18.600 V21.500 C18.600 23.300 13.300 23.300 13.300 21.500 Z M20.800 19.600 H26.100 V21.500 C26.100 23.300 20.800 23.300 20.800 21.500 Z M18.600 20.200 H20.800 M13.300 19.800 L10.500 20 M26.100 19.800 L28.900 20" fill="none" stroke="#343d47" stroke-width=".8"/>
<path d="M13.300 19.700 H26.100" stroke="#343d47" stroke-width="1" fill="none"/>
<path d="M20.200 22.300 L19.900 24.300 L20.600 24.400" stroke="#4b535c" stroke-width=".7" fill="none"/>
<path d="M16.300 27.400 C17.800 28.300 21.300 28.300 22.800 27.400 M18.300 29.300 C19.100 29.700 20 29.700 20.800 29.300" stroke="#6a7178" stroke-width=".7" fill="none"/>
</g>

<rect x="741.5" y="501.5" width="80" height="80" fill="#fff" stroke="#000" stroke-width="1.2"/>
<text x="781.5" y="545.5" text-anchor="middle" font-size="12" fill="#e6d0de">修改文字颜色</text>
<rect x="411.5" y="211.5" width="710" height="510" fill="none" stroke="#55c4ff" stroke-dasharray="3 3"/>
<circle cx="411.1" cy="210.7" r="4.700" fill="#29b6f2" stroke="#fff" stroke-width="1.600" paint-order="stroke"/>
<circle cx="766.1" cy="210.7" r="4.700" fill="#29b6f2" stroke="#fff" stroke-width="1.600" paint-order="stroke"/>
<circle cx="1121.1" cy="210.7" r="4.700" fill="#29b6f2" stroke="#fff" stroke-width="1.600" paint-order="stroke"/>
<circle cx="411.1" cy="465.7" r="4.700" fill="#29b6f2" stroke="#fff" stroke-width="1.600" paint-order="stroke"/>
<circle cx="1121.1" cy="465.7" r="4.700" fill="#29b6f2" stroke="#fff" stroke-width="1.600" paint-order="stroke"/>
<circle cx="411.1" cy="720.7" r="4.700" fill="#29b6f2" stroke="#fff" stroke-width="1.600" paint-order="stroke"/>
<circle cx="766.1" cy="720.7" r="4.700" fill="#29b6f2" stroke="#fff" stroke-width="1.600" paint-order="stroke"/>
<circle cx="1121.1" cy="720.7" r="4.700" fill="#29b6f2" stroke="#fff" stroke-width="1.600" paint-order="stroke"/>
<path d="M766 227 L770.200 231.200 L766 235.400 L761.800 231.200 Z" fill="#f6a623" stroke="#fff" stroke-width="1.600" paint-order="stroke"/>
<g fill="none" stroke="#29b6f2" stroke-width="1.800"><path d="M1133 194.800 A4.600 4.600 0 0 0 1128.400 199.400 A4.600 4.600 0 0 0 1129.700 202.600"/><path d="M1129.700 202.600 A4.600 4.600 0 0 0 1137.600 199.400 A4.600 4.600 0 0 0 1135.500 195.500" stroke-dasharray="1.800 1.400"/></g><path d="M1132.600 191.600 L1136.600 194.800 L1132.600 198 Z" fill="#29b6f2"/>
<defs><linearGradient id="wmb" x1="1" y1="0" x2="0" y2="1"><stop offset="0" stop-color="#7cc3ee"/><stop offset="1" stop-color="#4a86c8"/></linearGradient><linearGradient id="wmg" x1="1" y1="0" x2="0" y2="1"><stop offset="0" stop-color="#4cb866"/><stop offset=".6" stop-color="#8ccf5a"/><stop offset="1" stop-color="#f2e95a"/></linearGradient></defs>
<g opacity=".88">
<path d="M1089.500 781 C1072 782.500 1050 792 1047 806 C1046 812 1054 815.500 1064 812 C1056 812.500 1051.500 809.500 1053 804.500 C1055 797 1070 786.500 1089.500 781 Z" fill="url(#wmb)"/>
<path d="M1078 785.500 C1066 788.500 1054.500 797 1055.500 804.500 C1056.500 809.500 1065 810 1071 806.500 C1074 804.500 1073.500 801 1069.500 801 C1066.500 801 1064.500 803 1065.500 805 C1062 805 1060.500 802.500 1062 799.500 C1064.500 794 1071 789 1078 785.500 Z" fill="url(#wmb)"/>
<path d="M1066 797.500 C1073 794.500 1086 795 1088 800.500 C1090 807 1074 818.500 1052 820 C1066 815 1078 808 1078.500 802.500 C1078.800 799 1072 797 1066 797.500 Z" fill="url(#wmg)"/>
<text x="1090" y="799.800" font-size="21" font-weight="bold" fill="#5890d2" textLength="105.500" lengthAdjust="spacingAndGlyphs">极光下载站</text>
<text x="1091" y="819.300" font-size="16.800" fill="#5cb878" stroke="#5cb878" stroke-width=".45" textLength="102" lengthAdjust="spacingAndGlyphs">www.xz7.com</text>
</g>

</svg></div>
</div>
</body>
</html>
